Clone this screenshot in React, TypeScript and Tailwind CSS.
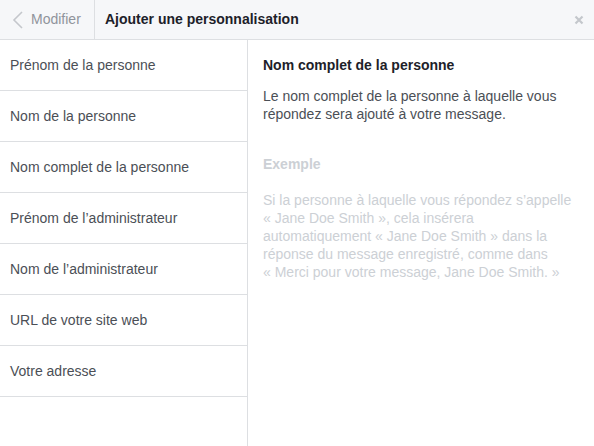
import React from "react";

const items = [
  "Prénom de la personne",
  "Nom de la personne",
  "Nom complet de la personne",
  "Prénom de l’administrateur",
  "Nom de l’administrateur",
  "URL de votre site web",
  "Votre adresse",
];

export default function App() {
  return (
    <div
      className="w-[594px] h-[446px] bg-white flex flex-col overflow-hidden"
      style={{ fontFamily: '"Liberation Sans", Arial, sans-serif' }}
    >
      <div className="h-[40px] shrink-0 bg-[#f6f7f9] border-b border-[#dddfe2] flex items-stretch">
        <div className="w-[95px] border-r border-[#dddfe2] flex items-center pl-[12px] gap-[7px]">
          <svg width="12" height="20" viewBox="0 0 12 20" fill="none">
            <path d="M10 2 L2 10 L10 18" stroke="#c4c7cc" strokeWidth="1.6" />
          </svg>
          <span className="text-[14px] text-[#90949c]">Modifier</span>
        </div>
        <div className="flex-1 flex items-center pl-[10px] text-[14px] font-bold text-[#1d2129]">
          Ajouter une personnalisation
        </div>
        <div className="w-[30px] flex items-center justify-center">
          <svg width="10" height="10" viewBox="0 0 10 10">
            <path d="M1.5 1.5 L8.5 8.5 M8.5 1.5 L1.5 8.5" stroke="#c4c7cc" strokeWidth="2.2" />
          </svg>
        </div>
      </div>
      <div className="flex flex-1 min-h-0">
        <div className="w-[248px] shrink-0 border-r border-[#dddfe2] flex flex-col">
          {items.map((t) => (
            <div
              key={t}
              className="h-[51px] border-b border-[#dddfe2] flex items-center pl-[10px] text-[14px] text-[#4b4f56]"
            >
              {t}
            </div>
          ))}
        </div>
        <div className="flex-1 pl-[15px] pr-[12px] pt-[17px]">
          <div className="text-[14px] font-bold text-[#1d2129] leading-[16px]">
            Nom complet de la personne
          </div>
          <div className="mt-[14px] text-[14px] leading-[18px] text-[#4b4f56]">
            Le nom complet de la personne à laquelle vous répondez sera ajouté à votre message.
          </div>
          <div className="mt-[33px] text-[14px] font-bold text-[#ccd0d5] leading-[16px]">
            Exemple
          </div>
          <div className="mt-[19px] text-[14px] leading-[18px] text-[#ccd0d5]">
            Si la personne à laquelle vous répondez s’appelle «{"\u00a0"}Jane Doe Smith{"\u00a0"}», cela insérera automatiquement «{"\u00a0"}Jane Doe Smith{"\u00a0"}» dans la réponse du message enregistré, comme dans «{"\u00a0"}Merci pour votre message, Jane Doe Smith.{"\u00a0"}»
          </div>
        </div>
      </div>
    </div>
  );
}
